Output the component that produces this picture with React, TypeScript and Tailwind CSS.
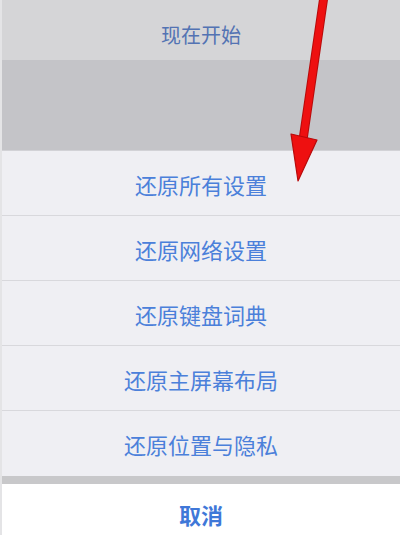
import React from "react";

const resetOptions = [
  "还原所有设置",
  "还原网络设置",
  "还原键盘词典",
  "还原主屏幕布局",
  "还原位置与隐私",
];

const fontStack = "font-['Noto_Sans_CJK_SC','Noto_Sans',sans-serif]";

const ArrowOverlay: React.FC = () => (
  <svg
    className="absolute left-0 top-0 pointer-events-none"
    width="400"
    height="200"
    viewBox="0 0 400 200"
  >
    <line x1="324" y1="-4" x2="303" y2="140" stroke="#b80a0a" strokeWidth="9" strokeLinecap="round" />
    <line x1="324" y1="-4" x2="303" y2="140" stroke="#ee1010" strokeWidth="7" strokeLinecap="round" />
    <polygon points="291,134 317,140 298,181" fill="#ee1010" stroke="#b80a0a" strokeWidth="1.2" strokeLinejoin="round" />
  </svg>
);

export default function App() {
  return (
    <div className={`relative w-[400px] h-[535px] overflow-hidden ${fontStack}`}>
      <div className="flex flex-col h-full border-l-2 border-[#e4e4e6]">
        <div className="h-[60px] shrink-0 bg-[#d5d5d7] flex items-center justify-center pt-[10px]">
          <span className="text-[20px] leading-none text-[#5373b3]">现在开始</span>
        </div>
        <div className="h-[91px] shrink-0 bg-[#c4c4c8] border-b border-[#d2d2d6]" />
        <div className="flex flex-col bg-[#efeff3]">
          {resetOptions.map((label, i) => (
            <div
              key={label}
              className={`h-[65px] shrink-0 flex items-center justify-center pt-[1px] ${
                i < resetOptions.length - 1 ? "border-b border-[#d8d8dc]" : ""
              }`}
            >
              <span className="text-[22px] leading-none text-[#4b80da]">{label}</span>
            </div>
          ))}
        </div>
        <div className="h-[8px] shrink-0 bg-[#c8c8ca]" />
        <div className="flex-1 bg-white flex items-center justify-center pt-[8px]">
          <span className="text-[22px] leading-none font-bold text-[#3f78d8]">取消</span>
        </div>
      </div>
      <ArrowOverlay />
    </div>
  );
}
